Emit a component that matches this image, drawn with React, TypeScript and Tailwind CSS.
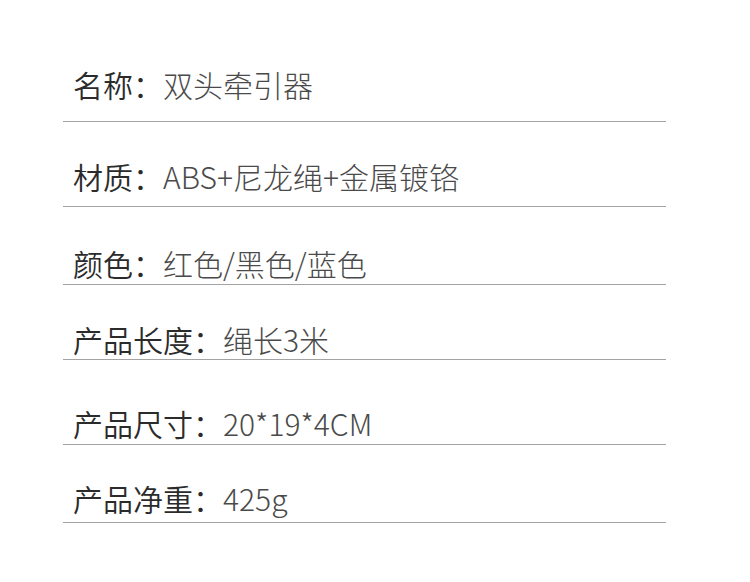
import React from "react";

type Row = { label: string; value: string; h: string; pt: string };

const rows: Row[] = [
    { label: "名称：", value: "双头牵引器", h: "h-[122px]", pt: "pt-[69px]" },
    { label: "材质：", value: "ABS+尼龙绳+金属镀铬", h: "h-[85px]", pt: "pt-[39px]" },
    { label: "颜色：", value: "红色/黑色/蓝色", h: "h-[78px]", pt: "pt-[41px]" },
    { label: "产品长度：", value: "绳长3米", h: "h-[75px]", pt: "pt-[39px]" },
    { label: "产品尺寸：", value: "20*19*4CM", h: "h-[85px]", pt: "pt-[48px]" },
    { label: "产品净重：", value: "425g", h: "h-[78px]", pt: "pt-[38px]" },
];

export default function App() {
    return (
        <div className="w-[750px] h-[582px] bg-white pl-[63px] font-['Noto_Sans_CJK_SC',sans-serif]">
            <div className="w-[603px]">
                {rows.map(r => (
                    <div key={r.label} className={`${r.h} ${r.pt} border-b border-[#a3a3a3] box-border`}>
                        <div className="pl-[10px] text-[30px] leading-[30px] whitespace-nowrap">
                            <span className="text-[#2b2b2b] font-['Noto_Sans_CJK_SC_DemiLight','Noto_Sans_CJK_SC',sans-serif] font-[350]">{r.label}</span>
                            <span className="text-[#4a4a4a] font-['Noto_Sans_CJK_SC_Light','Noto_Sans_CJK_SC',sans-serif] font-light">{r.value}</span>
                        </div>
                    </div>
                ))}
            </div>
        </div>
    );
}
